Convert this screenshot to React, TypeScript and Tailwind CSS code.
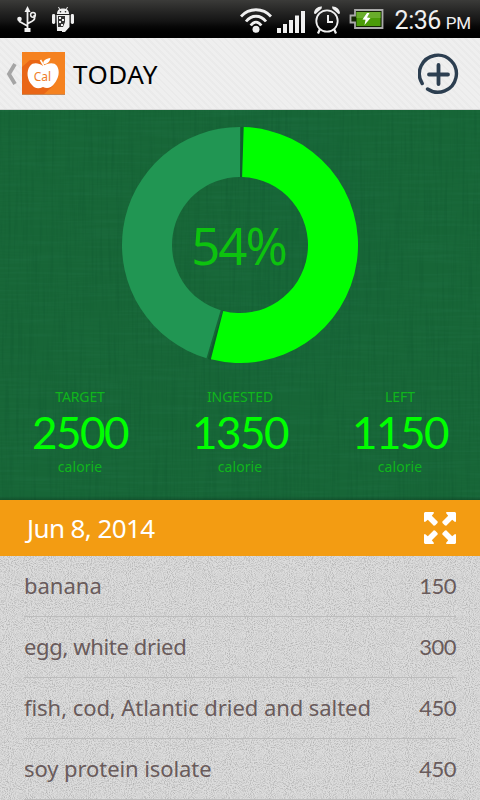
import type { ReactNode } from "react"

// ============================================================
// Calorie tracker, "today" screen: status bar, title bar,
// summary chart and the list of foods for the day.
// ============================================================

const FOODS = [
  { name: "banana", calories: 150, className: "tracking-[0px]" },
  { name: "egg, white dried", calories: 300, className: "tracking-[-0.35px]" },
  { name: "fish, cod, Atlantic dried and salted", calories: 450, className: "tracking-[-0.06px]" },
  { name: "soy protein isolate", calories: 450, className: "tracking-[-0.08px]" },
]

const STATS = [
  { label: "TARGET", value: 2500 },
  { label: "INGESTED", value: 1350 },
  { label: "LEFT", value: 1150 },
]

// Fine noise laid over a panel's flat colour
function Texture({ id, frequency, matrix }: { id: string; frequency: string; matrix: string }) {
  return (
    <svg className="absolute inset-0 h-full w-full" aria-hidden="true">
      <filter id={id} x="0" y="0" width="100%" height="100%" colorInterpolationFilters="sRGB">
        <feTurbulence type="fractalNoise" baseFrequency={frequency} numOctaves="2" seed="4" />
        <feColorMatrix values={matrix} />
      </filter>
      <rect width="100%" height="100%" filter={`url(#${id})`} />
    </svg>
  )
}

function point(radius: number, degrees: number) {
  const a = (degrees * Math.PI) / 180
  return `${118 + radius * Math.sin(a)} ${118 - radius * Math.cos(a)}`
}

function slice(from: number, to: number) {
  const large = to - from > 180 ? 1 : 0
  return `M${point(118, from)}A118 118 0 ${large} 1 ${point(118, to)}L${point(68, to)}A68 68 0 ${large} 0 ${point(68, from)}Z`
}

function StatusBar() {
  return (
    <div className="flex h-[38px] items-center bg-linear-to-b from-[#3b3b39] via-[#151515] via-55% to-black pr-[9px] pl-4 text-[#f0f0f0]">
      <svg width="22" height="28" viewBox="0 0 22 28" fill="none" stroke="currentColor" strokeWidth="1.8">
        <path d="M11.5 4V25M3.5 14V16.5L11.5 21M18 10C20 15 17 16 11.5 18.5" />
        <path d="M8.5 7L11.5 1L14.5 7Z" fill="currentColor" stroke="none" />
        <circle cx="3.5" cy="14" r="2.3" fill="currentColor" stroke="none" />
        <circle cx="17" cy="9.8" r="2.4" strokeWidth="1.5" />
        <path d="M8.5 23H14.5V27H8.5Z" fill="currentColor" stroke="none" />
      </svg>
      <svg className="ml-[14px]" width="22" height="28" viewBox="0 0 22 28" fill="currentColor">
        <path d="M5 9C5 4.500 8 3.500 11 3.500S17 4.500 17 9Z" />
        <path d="M8 5L6.5 2M14 5L15.5 2" stroke="currentColor" />
        <circle cx="8.500" cy="6.700" r=".8" fill="#222" />
        <circle cx="13.500" cy="6.700" r=".8" fill="#222" />
        <rect y="9" width="3.2" height="10" rx="1.4" />
        <rect x="18.800" y="9" width="3.2" height="10" rx="1.4" />
        <path d="M4.500 10H17.500V22L13 27H10V26H5Z" />
        <path d="M6 11H13V17L11 22H6Z" fill="#333" />
        <path d="M7 12H9V14H7ZM10 14H12V16H10ZM7 16H9V18H7ZM9 19H11V21H9Z" />
      </svg>

      <svg className="ml-auto" width="32" height="27" viewBox="0 0 32 27" fill="none" stroke="currentColor" strokeWidth="2.8">
        <path d="M1 10.500C9 1.500 23 1.500 31 10.500M6 15.500C11.500 8.500 20.500 8.500 26 15.500M10.700 19.500C14 15 18 15 21.300 19.500" />
        <circle cx="16" cy="23.300" r="3.500" fill="currentColor" stroke="none" />
      </svg>
      <svg className="ml-[5px]" width="28" height="34" viewBox="0 0 28 34" fill="currentColor">
        <path d="M0 26H4V31H0ZM6 22H10V31H6ZM12 18H16V31H12ZM18 13.500H22V31H18ZM24 9H28V31H24Z" />
      </svg>
      <svg className="ml-[9px]" width="26" height="30" viewBox="0 0 26 30" fill="none" stroke="currentColor" strokeWidth="1.800">
        <circle cx="13" cy="17" r="10.700" />
        <path d="M14 11V18H19" strokeWidth="2" />
        <path d="M6 25L4 29.500M20 25L22 29.500" strokeWidth="2.2" />
        <path d="M0 9.500C0 5 4 2 8 2.500L7.500 4.800L1.500 10ZM26 9.500C26 5 22 2 18 2.500L18.500 4.800L24.500 10Z" fill="currentColor" stroke="none" />
      </svg>
      <svg className="ml-[9px]" width="35" height="20" viewBox="0 0 35 20">
        <path d="M6 1H33.500V19H6V13.500H1.500V6.500H6Z" fill="#142503" stroke="#aaa" strokeWidth="1.800" />
        <rect x="7.500" y="3" width="24" height="14" fill="#4b9c08" />
        <rect x="7.500" y="3" width="24" height="6" fill="#69ad2b" />
        <path d="M18 4L13.500 10.500L16.500 10.800L15.500 16L21.500 9L18 8.500L20.500 4Z" fill="white" />
      </svg>
      <div className="ml-[11px] flex items-baseline gap-[5px] pt-[3px] font-['Roboto',sans-serif]">
        <span className="text-[25px] leading-7 tracking-[-0.5px]">2:36</span>
        <span className="text-[17px] leading-5 tracking-[-0.2px]">PM</span>
      </div>
    </div>
  )
}

function TitleBar() {
  return (
    <header className="flex h-[72px] items-center border-b border-[#d6d6d6] bg-[#efefef] bg-[repeating-linear-gradient(45deg,#0000_0px,#0000_3px,#00000005_3px,#00000005_5px)] pr-5 pl-[5px]">
      <svg width="12" height="22" viewBox="0 0 12 22" fill="none" stroke="#a5a5a5" strokeWidth="3.800">
        <path d="M10 1L4 11L10 21" />
      </svg>
      <svg className="ml-1" width="45" height="45" viewBox="0 0 45 45">
        <rect x="1" y="1" width="43" height="42" fill="#f58220" />
        <path d="M1 16L9 9L18 9L32 35L23 43H1Z" fill="#e96616" />
        <path d="M1 43.500H44" stroke="#c88754" />
        <path d="M22 15C18 12 12 11 9 15C5 20 6 29 11 34C14 38 18 38 22 36C26 38 30 37 33 33C38 27 39 20 36 15C33 11 27 12 22 15Z" fill="white" />
        <path d="M23 15L19.500 9" stroke="white" strokeWidth="1.500" />
        <path d="M22.500 13C21.500 9.500 25 7.500 29.500 7C28.500 11 26.500 13 22.500 13Z" fill="white" />
        <text x="21.500" y="29.500" textAnchor="middle" fill="#ef7e28" fontSize="12" fontFamily="Noto Sans, sans-serif">Cal</text>
      </svg>
      <h1 className="ml-[7px] text-[26px] leading-8 tracking-[0.5px] text-black">TODAY</h1>
      <svg className="ml-auto" width="42" height="42" viewBox="0 0 42 42" fill="none" stroke="#2c3e50" strokeWidth="3.400" strokeLinecap="round">
        <path d="M4.200 30.500A18.500 18.500 0 1 1 9.500 36" />
        <path d="M20.500 12V31M11 21.500H30" strokeWidth="3.800" />
      </svg>
    </header>
  )
}

function Summary() {
  return (
    <section className="relative flex h-[390px] flex-col items-center bg-[#176637] pt-[17px]">
      <Texture id="linenH" frequency="0.015 0.35" matrix="0 0 0 0 0.15  0 0 0 0 0.48  0 0 0 0 0.32  0.5 0 0 0 -0.22" />
      <Texture id="linenV" frequency="0.35 0.015" matrix="0 0 0 0 0.03  0 0 0 0 0.3  0 0 0 0 0.16  0.5 0 0 0 -0.22" />
      <div className="relative grid place-items-center">
        <svg className="col-start-1 row-start-1" width="236" height="236" viewBox="0 0 236 236">
          <path d="M119 0H122L120 50H118ZM86 232L89 233L103 184L101 183Z" fill="#0f5c2c" />
          <path d={slice(1.8, 194.3)} fill="#00ff00" />
          <path d={slice(196.5, 360)} fill="#219653" />
        </svg>
        <span className="col-start-1 row-start-1 pr-[3px] font-['Noto_Sans',sans-serif] text-[51px] tracking-[-2px] text-[#0dc20f]">54%</span>
      </div>
      <dl className="relative mt-[23px] grid w-full grid-cols-3 text-center">
        {STATS.map((stat) => (
          <div key={stat.label}>
            <dt className="text-[14px] leading-[22px] tracking-[-0.1px] text-[#10b51c]">{stat.label}</dt>
            <dd className="font-['Lato','Noto_Sans',sans-serif] text-[44px] leading-[48px] tracking-[-1.5px] text-[#00ff00]">{stat.value}</dd>
            <dd className="text-[14px] leading-[22px] tracking-[0.1px] text-[#10b51c]">calorie</dd>
          </div>
        ))}
      </dl>
      <Shade />
    </section>
  )
}

function Shade() {
  return <div className="absolute inset-x-0 bottom-0 h-1 bg-linear-to-b from-transparent to-black/20" />
}

function DateBar({ children }: { children: ReactNode }) {
  return (
    <div className="flex h-14 items-center justify-between bg-[#f39c12] px-6 text-white">
      <h2 className="pl-[3px] text-[26px] leading-8 tracking-[-0.6px]">{children}</h2>
      <svg width="32" height="32" viewBox="0 0 32 32" fill="currentColor">
        {[0, 90, 180, 270].map((turn) => (
          <path key={turn} transform={`rotate(${turn} 16 16)`} d="M1 0H9.500L10 1L7.800 3.800L13.800 9.800L13.500 11L11 13.500L9.800 13.800L3.800 7.800L1 10L0 9.500V1Z" />
        ))}
      </svg>
    </div>
  )
}

export default function App() {
  return (
    <main className="flex h-[800px] w-[480px] flex-col overflow-hidden font-['Noto_Sans',sans-serif]">
      <StatusBar />
      <TitleBar />
      <Summary />
      <DateBar>Jun 8, 2014</DateBar>
      <section className="relative flex-1 overflow-hidden bg-[#dcdcdc]">
        <Texture id="paper" frequency="0.95" matrix="0 0 0 0 0.5  0 0 0 0 0.5  0 0 0 0 0.5  1.1 0 0 0 -0.46" />
        <ul className="relative px-6 text-[22px] text-[#695b5b]">
          {FOODS.map((food) => (
            <li key={food.name} className="flex h-[61px] items-center justify-between border-b border-[#bcbcbc] pb-[2px]">
              <span className={food.className}>{food.name}</span>
              <span className="font-['Lato','Noto_Sans',sans-serif] tracking-[-0.5px]">{food.calories}</span>
            </li>
          ))}
        </ul>
      </section>
    </main>
  )
}
